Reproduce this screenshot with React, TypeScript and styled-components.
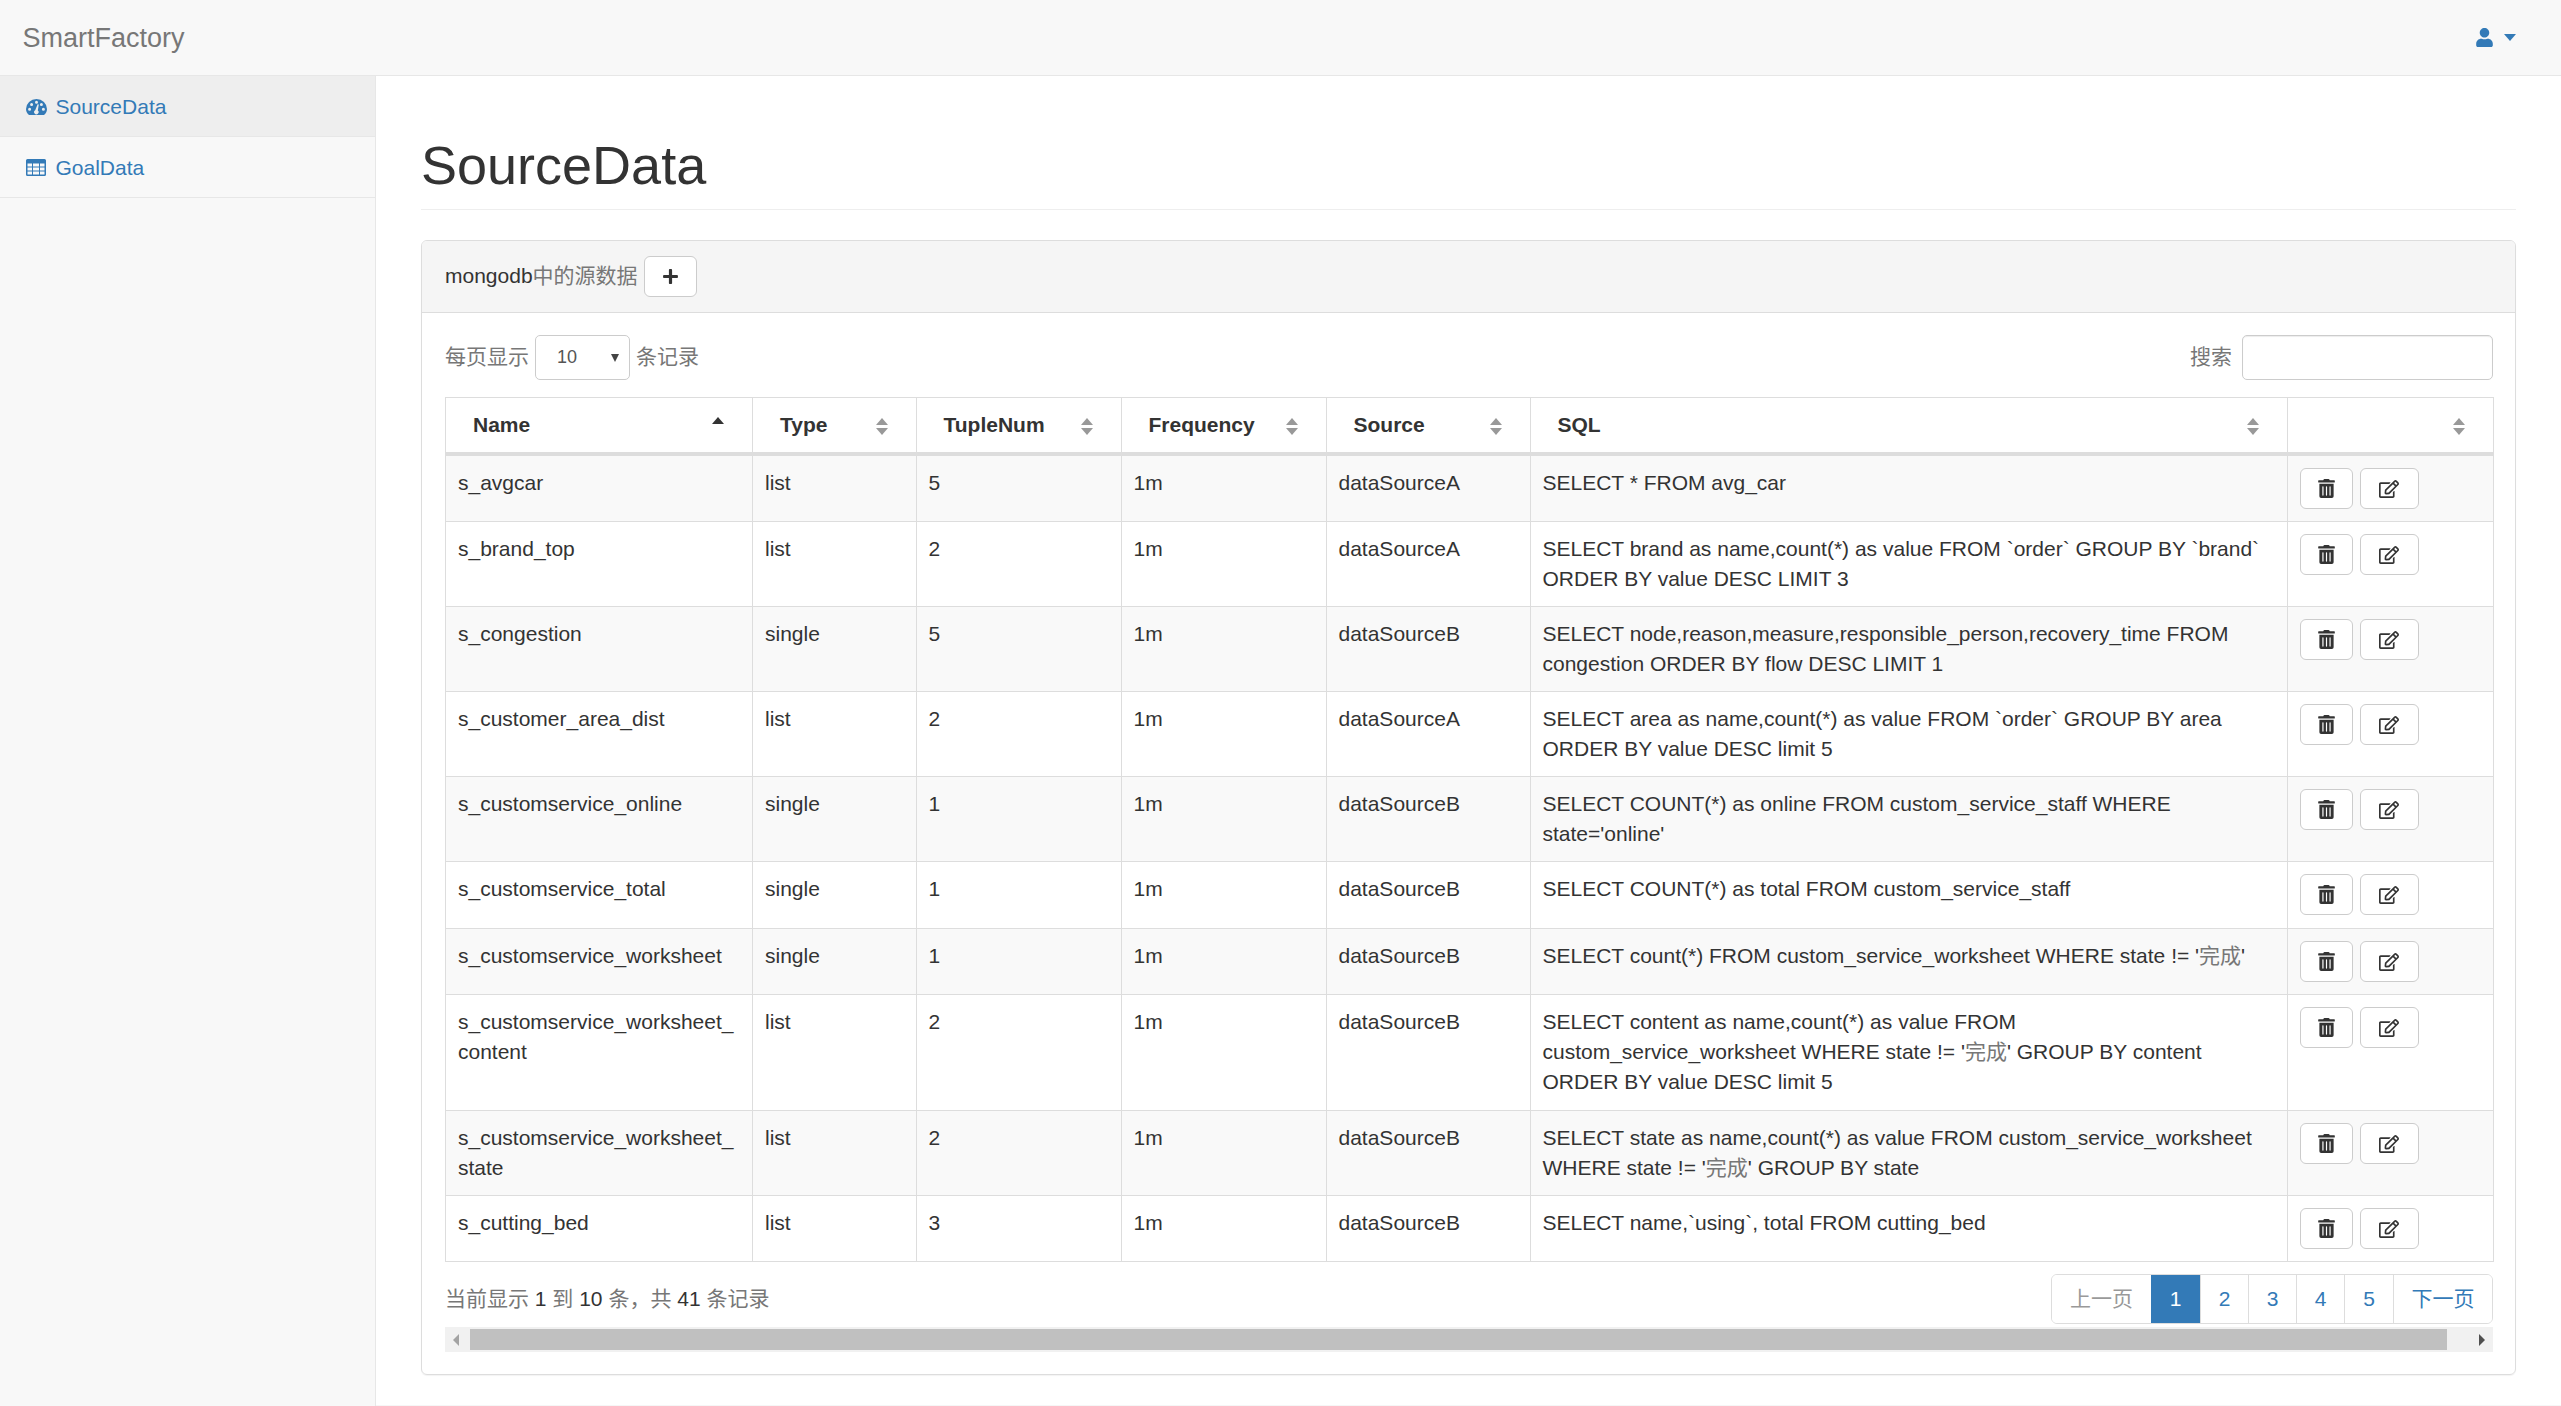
import React from 'react';
import styled, { createGlobalStyle } from 'styled-components';
import { FaTrashAlt, FaRegEdit, FaUser, FaPlus } from 'react-icons/fa';

const Global = createGlobalStyle`
  html, body { margin: 0; padding: 0; height: 100%; background: #fff; }
  body { font-family: "Liberation Sans", "Noto Sans CJK SC", sans-serif; font-size: 21px; line-height: 30px; color: #333; overflow: hidden; }
  * { box-sizing: border-box; }
`;

const Page = styled.div`display: flex; flex-direction: column; height: 1406px;`;
const Navbar = styled.header`
  height: 76px; flex: none; background: #f8f8f8; border-bottom: 1px solid #e7e7e7;
  display: flex; align-items: center; justify-content: space-between; padding: 0 45px 0 22.5px;
`;
const Brand = styled.a`font-size: 27px; line-height: 30px; color: #777;`;
const UserMenu = styled.a`display: flex; align-items: center; gap: 10px; color: #337ab7;`;
const Caret = styled.span`
  width: 0; height: 0; border-left: 6px solid transparent; border-right: 6px solid transparent;
  border-top: 7px solid #337ab7;
`;
const Body = styled.div`display: flex; flex: 1; min-height: 0;`;
const Sidebar = styled.nav`width: 376px; flex: none; background: #f8f8f8; border-right: 1px solid #e7e7e7;`;
const NavItem = styled.a<{ $active?: boolean }>`
  display: flex; align-items: center; height: 61px; padding: 1px 22.5px 0; color: #337ab7;
  background: ${p => (p.$active ? '#eee' : 'transparent')};
  border-bottom: 1px solid #e7e7e7;
`;
const NavIcon = styled.span`width: 33px; flex: none; display: flex; padding-left: 3px; align-items: center;`;
const Main = styled.main`flex: 1; min-width: 0; padding: 0 45px; border-bottom: 1px solid #f6f6f6;`;
const Header = styled.div`margin: 60px 0 30px; padding-bottom: 13.5px; border-bottom: 1px solid #eee;`;
const Title = styled.h1`margin: 0; font-size: 54px; line-height: 59.4px; font-weight: 500; color: #333;`;
const Panel = styled.section`border: 1px solid #ddd; border-radius: 6px; box-shadow: 0 1px 1px rgba(0,0,0,.05);`;
const PanelHead = styled.div`
  height: 72px; background: #f5f5f5; border-bottom: 1px solid #ddd; border-radius: 5px 5px 0 0;
  display: flex; align-items: center; padding: 0 23px;
`;
const Han = styled.span`color: #777;`;
const IconButton = styled.button<{ $w: number }>`
  width: ${p => p.$w}px; height: 41px; padding: 0; background: #fff; border: 1px solid #ccc; border-radius: 6px;
  color: #333; display: inline-flex; align-items: center; justify-content: center; vertical-align: middle;
`;
const AddButton = styled(IconButton)`margin-left: 6px;`;
const PanelBody = styled.div`padding: 22px 22px 22px 23px;`;
const Controls = styled.div`display: flex; justify-content: space-between; align-items: center; height: 45px; margin-bottom: 17px; font-size: 21px;`;
const Group = styled.label`display: flex; align-items: center; gap: 6px;`;
const SelectBox = styled.div`
  position: relative; width: 95px; height: 45px; border: 1px solid #ccc; border-radius: 5px; background: #fff;
  &::after {
    content: ''; position: absolute; right: 10px; top: 18px;
    border-left: 4px solid transparent; border-right: 4px solid transparent; border-top: 8px solid #444;
  }
`;
const Select = styled.select`
  appearance: none; width: 100%; height: 100%; border: 0; background: transparent; padding: 0 0 0 21px;
  font: 18px "Liberation Sans", sans-serif; color: #555;
`;
const SearchBox = styled.input`
  width: 251px; height: 45px; border: 1px solid #ccc; border-radius: 5px; margin-left: 4px;
  box-shadow: inset 0 1px 1px rgba(0,0,0,.075);
`;
const Table = styled.table`
  width: 2048px; table-layout: fixed; border-collapse: collapse; border: 1px solid #ddd;
  th, td { border: 1px solid #ddd; }
  tbody tr:nth-child(odd) { background: #f9f9f9; }
`;
const Th = styled.th`
  height: 57px; padding: 0 27px; border-bottom: 4px solid #ddd !important; text-align: left;
  font-size: 21px; font-weight: 700; position: relative;
`;
const Td = styled.td<{ $tall?: boolean }>`padding: 12px 12px ${p => (p.$tall ? '13px' : '12px')}; vertical-align: top; overflow-wrap: break-word;`;
const SortPair = styled.span<{ $active?: boolean }>`
  position: absolute; right: 27px; top: 20px; width: 13px; height: 17px;
  &::before {
    content: ''; position: absolute; left: 0; top: ${p => (p.$active ? '-1px' : '0')};
    border-left: 6.5px solid transparent; border-right: 6.5px solid transparent;
    border-bottom: 7px solid ${p => (p.$active ? '#333' : '#999')};
  }
  &::after {
    content: ${p => (p.$active ? 'none' : "''")}; position: absolute; left: 0; bottom: 0;
    border-left: 6.5px solid transparent; border-right: 6.5px solid transparent;
    border-top: 7px solid #999;
  }
`;
const Actions = styled.div`display: flex; gap: 7px;`;
const Footer = styled.div`display: flex; justify-content: space-between; align-items: center; margin-top: 12px; height: 50px;`;
const Pager = styled.ul`display: flex; margin: 0; padding: 0; list-style: none; height: 50px; border: 1px solid #ddd; border-radius: 6px; overflow: hidden;`;
const PageItem = styled.li<{ $w: number; $active?: boolean; $muted?: boolean }>`
  width: ${p => p.$w}px; display: flex; align-items: center; justify-content: center;
  border-left: ${p => (p.$active ? 0 : '1px solid #ddd')};
  &:first-child { border-left: 0; }
  background: ${p => (p.$active ? '#337ab7' : '#fff')};
  color: ${p => (p.$active ? '#fff' : p.$muted ? '#999' : '#337ab7')};
`;
const ScrollBar = styled.div`display: flex; align-items: center; height: 25px; margin-top: 3px; background: #f1f1f1;`;
const ScrollEnd = styled.div<{ $w: number; $right?: boolean }>`
  width: ${p => p.$w}px; flex: none; height: 100%; display: flex; align-items: center;
  justify-content: ${p => (p.$right ? 'flex-end' : 'flex-start')}; padding: 0 8px;
  &::before {
    content: ''; border-top: 6px solid transparent; border-bottom: 6px solid transparent;
    ${p => (p.$right ? 'border-left: 6px solid #505050;' : 'border-right: 6px solid #a3a3a3;')}
  }
`;
const ScrollThumb = styled.div`flex: 1; height: 21px; background: #c0c0c0;`;

const circle = (x: number, y: number, r: number) =>
  `M${x - r} ${y}a${r} ${r} 0 1 0 ${2 * r} 0a${r} ${r} 0 1 0 ${-2 * r} 0z`;

const GaugeIcon = () => (
  <svg width="21" height="16" viewBox="0 0 21 16" fill="#337ab7" aria-hidden="true">
    <path
      fillRule="evenodd"
      d={`M3 16C1 14.5 0 12.2 0 10A10.5 10 0 0 1 21 10C21 12.2 20 14.5 18 16Z${circle(3.6, 10.2, 1.5)}${circle(5.6, 5.4, 1.5)}${circle(10.5, 3.2, 1.5)}${circle(15.4, 5.4, 1.5)}${circle(17.4, 10.2, 1.5)}M9.2 11.2L11.6 5.2L12.8 5.6L11.8 11.4A2.2 2.2 0 1 1 9.2 11.2Z`}
    />
  </svg>
);

const TableIcon = () => (
  <svg width="20" height="17" viewBox="0 0 20 17" fill="#337ab7" aria-hidden="true">
    <path fillRule="evenodd" d="M1.5 0h17A1.5 1.5 0 0 1 20 1.5v14a1.5 1.5 0 0 1-1.5 1.5h-17A1.5 1.5 0 0 1 0 15.5v-14A1.5 1.5 0 0 1 1.5 0zM1.5 4.5v3h4.5v-3zM7 4.5v3h6v-3zM14 4.5v3h4.5v-3zM1.5 8.5v3h4.5v-3zM7 8.5v3h6v-3zM14 8.5v3h4.5v-3zM1.5 12.5v3h4.5v-3zM7 12.5v3h6v-3zM14 12.5v3h4.5v-3z" />
  </svg>
);

type Row = { name: string; type: string; n: number; src: string; sql: React.ReactNode; tall?: boolean };
const done = <Han>完成</Han>;
const rows: Row[] = [
  { name: 's_avgcar', type: 'list', n: 5, src: 'dataSourceA', sql: 'SELECT * FROM avg_car' },
  { name: 's_brand_top', type: 'list', n: 2, src: 'dataSourceA', sql: 'SELECT brand as name,count(*) as value FROM `order` GROUP BY `brand` ORDER BY value DESC LIMIT 3' },
  { name: 's_congestion', type: 'single', n: 5, src: 'dataSourceB', sql: 'SELECT node,reason,measure,responsible_person,recovery_time FROM congestion ORDER BY flow DESC LIMIT 1' },
  { name: 's_customer_area_dist', type: 'list', n: 2, src: 'dataSourceA', sql: 'SELECT area as name,count(*) as value FROM `order` GROUP BY area ORDER BY value DESC limit 5' },
  { name: 's_customservice_online', type: 'single', n: 1, src: 'dataSourceB', sql: "SELECT COUNT(*) as online FROM custom_service_staff WHERE state='online'" },
  { name: 's_customservice_total', type: 'single', n: 1, src: 'dataSourceB', sql: 'SELECT COUNT(*) as total FROM custom_service_staff', tall: true },
  { name: 's_customservice_worksheet', type: 'single', n: 1, src: 'dataSourceB', sql: <>SELECT count(*) FROM custom_service_worksheet WHERE state != '{done}'</> },
  { name: 's_customservice_worksheet_content', type: 'list', n: 2, src: 'dataSourceB', sql: <>SELECT content as name,count(*) as value FROM custom_service_worksheet WHERE state != '{done}' GROUP BY content ORDER BY value DESC limit 5</>, tall: true },
  { name: 's_customservice_worksheet_state', type: 'list', n: 2, src: 'dataSourceB', sql: <>SELECT state as name,count(*) as value FROM custom_service_worksheet WHERE state != '{done}' GROUP BY state</> },
  { name: 's_cutting_bed', type: 'list', n: 3, src: 'dataSourceB', sql: 'SELECT name,`using`, total FROM cutting_bed' },
];
const cols = [307, 163.5, 205, 205, 204, 757, 206.5];
const heads = ['Name', 'Type', 'TupleNum', 'Frequency', 'Source', 'SQL', ''];
const pages: { t: React.ReactNode; w: number; active?: boolean; muted?: boolean }[] = [
  { t: '上一页', w: 99, muted: true }, { t: '1', w: 49, active: true }, { t: '2', w: 48 }, { t: '3', w: 48 },
  { t: '4', w: 48 }, { t: '5', w: 49 }, { t: '下一页', w: 99 },
];

export default function App() {
  return (
    <Page>
      <Global />
      <Navbar>
        <Brand>SmartFactory</Brand>
        <UserMenu><FaUser size={19} /><Caret /></UserMenu>
      </Navbar>
      <Body>
        <Sidebar>
          <NavItem $active><NavIcon><GaugeIcon /></NavIcon>SourceData</NavItem>
          <NavItem><NavIcon><TableIcon /></NavIcon>GoalData</NavItem>
        </Sidebar>
        <Main>
          <Header><Title>SourceData</Title></Header>
          <Panel>
            <PanelHead>mongodb<Han>中的源数据</Han><AddButton $w={53}><FaPlus size={17} /></AddButton></PanelHead>
            <PanelBody>
              <Controls>
                <Group><Han>每页显示</Han><SelectBox><Select defaultValue="10"><option>10</option></Select></SelectBox><Han>条记录</Han></Group>
                <Group><Han>搜索</Han><SearchBox /></Group>
              </Controls>
              <Table>
                <colgroup>{cols.map((w, i) => <col key={i} style={{ width: w }} />)}</colgroup>
                <thead><tr>{heads.map((h, i) => <Th key={i}>{h}<SortPair $active={i === 0} /></Th>)}</tr></thead>
                <tbody>
                  {rows.map(r => (
                    <tr key={r.name}>
                      <Td>{r.name}</Td><Td>{r.type}</Td><Td>{r.n}</Td><Td>1m</Td><Td>{r.src}</Td><Td $tall={r.tall}>{r.sql}</Td>
                      <Td $tall={r.tall}><Actions>
                        <IconButton $w={53}><FaTrashAlt size={19} /></IconButton>
                        <IconButton $w={59}><FaRegEdit size={20} /></IconButton>
                      </Actions></Td>
                    </tr>
                  ))}
                </tbody>
              </Table>
              <Footer>
                <span><Han>当前显示</Han> 1 <Han>到</Han> 10 <Han>条，共</Han> 41 <Han>条记录</Han></span>
                <Pager>{pages.map((p, i) => <PageItem key={i} $w={p.w} $active={p.active} $muted={p.muted}>{p.t}</PageItem>)}</Pager>
              </Footer>
              <ScrollBar><ScrollEnd $w={25} /><ScrollThumb /><ScrollEnd $w={46} $right /></ScrollBar>
            </PanelBody>
          </Panel>
        </Main>
      </Body>
    </Page>
  );
}
